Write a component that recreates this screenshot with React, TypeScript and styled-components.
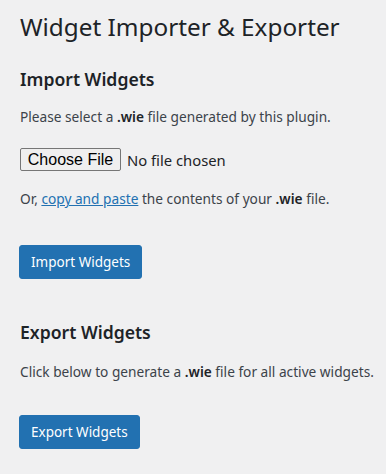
import React from 'react';
import styled, { createGlobalStyle } from 'styled-components';

const GlobalStyle = createGlobalStyle`
  html, body {
    margin: 0;
    padding: 0;
    background: #f0f0f1;
  }
  body {
    font-family: 'Noto Sans', 'Open Sans', sans-serif;
    color: #3c434a;
  }
`;

const Wrap = styled.div`
  padding: 11px 20px 0;
  min-height: 474px;
  box-sizing: border-box;
`;

const Title = styled.h1`
  margin: 0;
  font-size: 24.3px;
  line-height: 32px;
  font-weight: 400;
  color: #1d2327;
`;

const SectionTitle = styled.h2<{ $gap: number }>`
  margin: ${(p) => p.$gap}px 0 0;
  font-size: 17.6px;
  line-height: 24px;
  font-weight: 600;
  color: #1d2327;
`;

const Text = styled.p<{ $gap: number }>`
  margin: ${(p) => p.$gap}px 0 0;
  font-size: 13.7px;
  line-height: 20px;
  white-space: nowrap;

  strong {
    font-weight: 600;
    color: #1d2327;
  }

  a {
    color: #2271b1;
    text-decoration: underline;
  }
`;

const FileRow = styled.div`
  margin-top: 21px;
  display: flex;
  align-items: center;
  gap: 6px;
  height: 23px;
`;

const FileButton = styled.span`
  display: inline-flex;
  align-items: center;
  justify-content: center;
  box-sizing: border-box;
  width: 101px;
  height: 23px;
  border: 1px solid #767676;
  border-radius: 2px;
  background: #efefef;
  font-family: 'Liberation Sans', Arial, sans-serif;
  font-size: 16px;
  color: #000;
`;

const FileName = styled.span`
  font-size: 14.8px;
  color: #1d2327;
`;

const Button = styled.button<{ $gap: number }>`
  display: block;
  margin: ${(p) => p.$gap}px 0 0 -1px;
  height: 34px;
  padding: 0 11px;
  border: 1px solid #2271b1;
  border-radius: 3px;
  background: #2271b1;
  color: #fff;
  font-family: inherit;
  font-size: 13.5px;
  cursor: pointer;
`;

export default function App() {
  return (
    <>
      <GlobalStyle />
      <Wrap>
        <Title>Widget Importer &amp; Exporter</Title>

        <SectionTitle $gap={24}>Import Widgets</SectionTitle>
        <Text $gap={16}>
          Please select a <strong>.wie</strong> file generated by this plugin.
        </Text>
        <FileRow>
          <FileButton>Choose File</FileButton>
          <FileName>No file chosen</FileName>
        </FileRow>
        <Text $gap={18}>
          Or, <a href="#">copy and paste</a> the contents of your <strong>.wie</strong> file.
        </Text>
        <Button $gap={36}>Import Widgets</Button>

        <SectionTitle $gap={41}>Export Widgets</SectionTitle>
        <Text $gap={18}>
          Click below to generate a <strong>.wie</strong> file for all active widgets.
        </Text>
        <Button $gap={33}>Export Widgets</Button>
      </Wrap>
    </>
  );
}
